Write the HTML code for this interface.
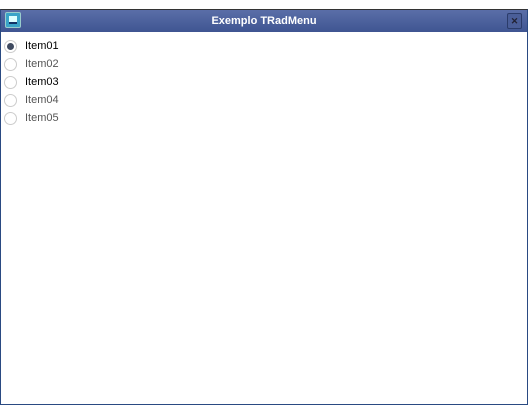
<!DOCTYPE html>
<html><head><style>
body{margin:0;width:530px;height:407px;background:#fff;position:relative;overflow:hidden;font-family:"Liberation Sans",Arial,sans-serif}
.win{position:absolute;left:0;top:9px;width:528px;height:396px;border:1px solid #2a4a82;border-top-color:#333;box-sizing:border-box;background:#fff}
.title{position:absolute;left:0;top:0;right:0;height:22px;background:linear-gradient(#5a6ea8,#3f5592);color:#fff;font-weight:bold;font-size:11px;text-align:center;line-height:22px}
.ico{position:absolute;left:4px;top:2px;width:16px;height:16px;border:1px solid #9cc;border-radius:2px;background:#3aa4c8;box-sizing:border-box}
.ico:after{content:"";position:absolute;left:3px;top:3px;width:8px;height:6px;background:#dff;border-bottom:2px solid #136}
.x{position:absolute;right:5px;top:3px;width:15px;height:16px;border:1px solid #2b3c6a;border-radius:2px;background:#4a5e98;box-sizing:border-box;color:#223;font-size:9px;line-height:14px;text-align:center}
.it{position:absolute;left:4px;font-size:11px;color:#555}
.r{position:absolute;left:0;top:0;width:13px;height:13px;border:1px solid #ccc;border-radius:50%;box-sizing:border-box;background:#fff}
.r.on:after{content:"";position:absolute;left:2px;top:2px;width:7px;height:7px;border-radius:50%;background:#3f4a60}
.it span{position:absolute;left:21px;top:0;line-height:13px;white-space:nowrap}
</style></head><body>
<div class="win"><div class="title"><div class="ico"></div>Exemplo TRadMenu<div class="x">✕</div></div></div>
<div class="it" style="top:40px"><div class="r on"></div><span style="color:#000">Item01</span></div>
<div class="it" style="top:58px"><div class="r"></div><span>Item02</span></div>
<div class="it" style="top:76px"><div class="r"></div><span style="color:#000">Item03</span></div>
<div class="it" style="top:94px"><div class="r"></div><span>Item04</span></div>
<div class="it" style="top:112px"><div class="r"></div><span>Item05</span></div>
</body></html>
